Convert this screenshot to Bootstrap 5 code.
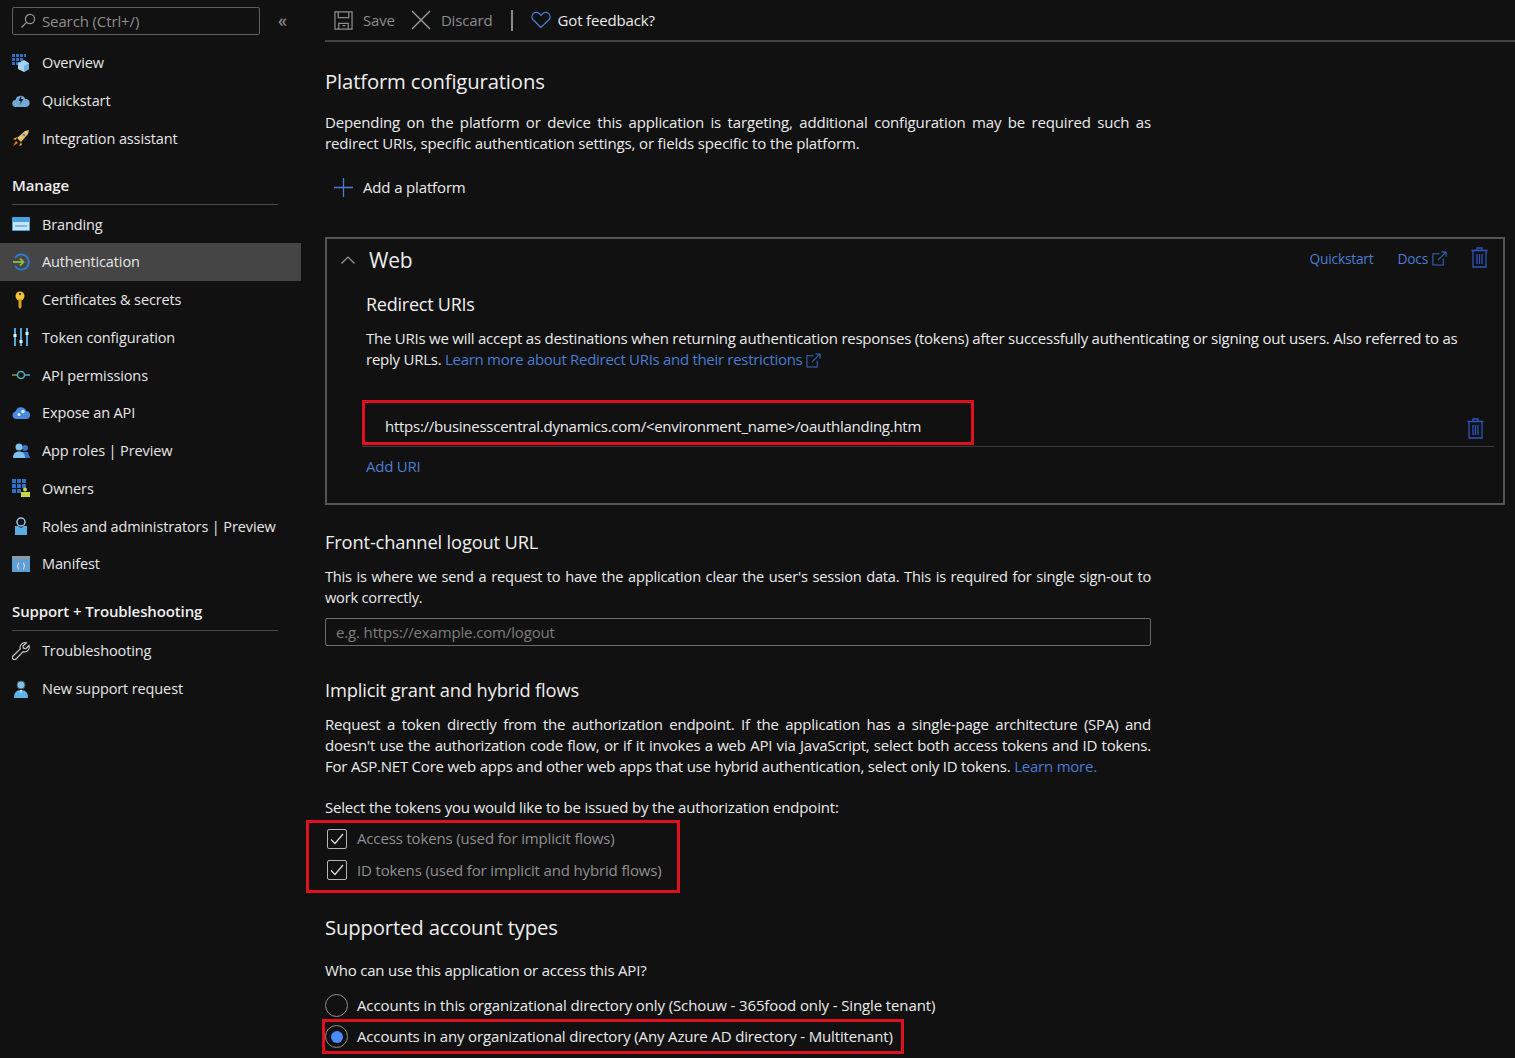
<!DOCTYPE html>
<html lang="en">
<head>
<meta charset="utf-8">
<title>Authentication</title>
<link href="https://cdn.jsdelivr.net/npm/bootstrap@5.3.0/dist/css/bootstrap.min.css" rel="stylesheet">
<style>
html,body{height:1058px;overflow:hidden}
body{background:#111;color:#ebebeb;font-family:"Open Sans","Noto Sans",sans-serif;font-size:14.5px;line-height:21px;letter-spacing:-.12px}
a{text-decoration:none}
.sidepane{width:301px;flex:none}
.searchrow{height:44px;padding:7px 12px 0;align-items:flex-start}
.searchfield{width:248px;height:28px;border:1px solid #5e5e5e;border-radius:2px;color:#8d8d8d;padding:0 7px;gap:6px;font-size:15px}
.collapser{margin-left:18px;color:#999;font-size:18px;line-height:26px}
.navitem{height:37.75px;padding-left:12px;gap:12px;color:#e6e6e6}
.navitem svg{width:18px;height:18px;flex:none}
.navitem.current{background:#454545}
.navhead{font-weight:600;font-size:15px;color:#efefef;margin:17.5px 23px .5px 12px;height:30px;border-bottom:1px solid #4a4a4a;line-height:21px}
.navhead-second{margin-top:17.75px;margin-bottom:1.5px}
.mainpane{flex:1;min-width:0;padding-left:24px;font-size:15px;letter-spacing:-.15px}
.toolstrip{height:42px;border-bottom:2px solid #444;padding-left:9px}
.toolgrey{color:#8c8c8c}
.toolgap{gap:6px}
.toolsep{width:2px;height:21px;background:#8a8a8a;margin:0 18px}
.fbgap{gap:3px}
.sectitle{font-size:20.3px;line-height:28px;font-weight:400;color:#efefef;margin:0}
.title-top{margin-top:25px}
.subtitle{font-size:18.3px;line-height:26px;font-weight:400;color:#efefef;margin:0}
.just{width:826px;text-align:justify;margin:0}
.p-top{margin-top:17px}
.addplat{height:26px;padding-left:9px;gap:10px;margin-top:20px}
.webcard{width:1180px;height:268px;border:2px solid #555;padding:0 9px 0 39px;margin-top:37px;letter-spacing:-.24px}
.webhead{height:42px}
.webname{font-size:21px;margin-left:-25px}
.webname svg{margin-right:14px}
.headlink{font-size:13.8px;margin-bottom:4px}
.headtrash{margin:0 6px 5px 24px}
.linkblue{color:#4b7bd3}
.redirhead{margin-top:10px;font-size:18px}
.redirtext{margin:10.5px 0 0;width:1105px}
.redirlink{letter-spacing:-.3px}
.uriline{border-bottom:1px solid #3d3d3d;height:47px;margin:30px 0 0 -4px;padding-left:4px}
.uricell{width:612px;height:45px;border:3px solid #e0101f;margin-left:-4px;padding:13px 0 0 20px;letter-spacing:-.26px}
.uritrash{margin:18px 10px 0 0}
.adduri{margin-top:9px}
.front-title{margin-top:24px}
.after-sub{margin-top:11px}
.fronttext{font-size:14.6px;letter-spacing:-.2px}
.implicittext{letter-spacing:-.22px}
.urlfield{width:826px;height:28px;border:1px solid #6a6a6a;border-radius:2px;padding:0 10px;color:#7d7d7d;margin-top:10px}
.implicit-title{margin-top:31px}
.selecttext{margin:20px 0 0;letter-spacing:-.19px}
.redframe{border:3px solid #e0101f}
.tokenframe{width:374px;height:73px;margin:2px 0 0 -19px;padding:0 0 4px 18px}
.tick{width:20px;height:20px;border:1px solid #b5b5b5;border-radius:2px;flex:none}
.tokenrow{height:33px;gap:10px;color:#8f8f8f}
.supported-title{margin-top:20px}
.whotext{margin:19px 0 0;letter-spacing:-.19px}
.radiorow{gap:9px}
.radio-plain{height:28px;margin-top:10px;letter-spacing:-.12px}
.radiodot{width:23px;height:23px;border-radius:50%;border:1px solid #8f8f8f;flex:none}
.radiodot.on{display:flex;align-items:center;justify-content:center}
.radiodot.on::after{content:"";width:12px;height:12px;border-radius:50%;background:#4a8cff}
.radioframe{width:582px;height:35px;margin-left:-3px}
</style>
</head>
<body>
<div class="d-flex">
<aside class="sidepane">
  <div class="d-flex searchrow">
    <div class="d-flex align-items-center searchfield">
      <svg width="16" height="16" viewBox="0 0 16 16" fill="none" stroke="#9a9a9a" stroke-width="1.2"><circle cx="10" cy="6" r="4.6"/><path d="M6.6 9.4 1.5 14.5"/></svg>
      <span>Search (Ctrl+/)</span>
    </div>
    <span class="collapser">«</span>
  </div>
  <a class="d-flex align-items-center navitem"><svg viewBox="0 0 18 18"><path fill="#2f6fc4" d="M0 0h3v3H0zM4 0h3v3H4zM8 0h3v3H8zM12 0h2v3h-2zM0 4h3v3H0zM4 4h3v3H4zM8 4h3v3H8zM0 8h3v3H0zM4 8h3v3H4z"/><path fill="#a5d3f0" d="M6 9l6-3 5 3v6l-5 3-6-3z"/><path fill="#6eb0e0" d="M12 12v6l5-3V9z"/></svg><span>Overview</span></a>
  <a class="d-flex align-items-center navitem"><svg viewBox="0 0 18 18"><path fill="#6ea9d7" d="M4 15a3.5 3.5 0 0 1-.4-7 5 5 0 0 1 9.6-1 4 4 0 0 1 .8 8z"/><path fill="#111" d="M9.5 3 6.500 9h2.500l-1.500 4 4-6H9z"/></svg><span>Quickstart</span></a>
  <a class="d-flex align-items-center navitem"><svg viewBox="0 0 18 18"><path fill="#f0a030" d="M5 8 1 10l3 1zM9 13l-2 4 3-1z"/><path fill="#e8c26a" d="M5 9 13 2l4-1-1 4-7 8z"/><path fill="#e8762a" d="M4 12l2 2-5 3z"/><circle cx="12" cy="6" r="1.3" fill="#4a90d9"/></svg><span>Integration assistant</span></a>
  <div class="navhead">Manage</div>
  <a class="d-flex align-items-center navitem"><svg viewBox="0 0 18 18"><rect y="2" width="18" height="14" rx="1" fill="#4aa0dc"/><rect x="1" y="7" width="16" height="8" fill="#c5e4f6"/><path stroke="#3a88c4" d="M3 11h12"/></svg><span>Branding</span></a>
  <a class="d-flex align-items-center navitem current"><svg viewBox="0 0 18 18" fill="none"><path stroke="#2f78cf" stroke-width="2" d="M3 5a7.500 7.500 0 1 1 0 8"/><path stroke="#86b33a" stroke-width="2" d="M1 9h10M8 5.500 11.500 9 8 12.500"/></svg><span>Authentication</span></a>
  <a class="d-flex align-items-center navitem"><svg viewBox="0 0 18 18"><circle cx="8" cy="5" r="4.5" fill="#f2c335"/><path fill="#e0a31e" d="M6.500 8h3v8l-1.500 2-1.500-2z"/><circle cx="8" cy="3" r="1" fill="#111"/></svg><span>Certificates &amp; secrets</span></a>
  <a class="d-flex align-items-center navitem"><svg viewBox="0 0 18 18"><path stroke="#58a6de" stroke-width="2" d="M3 0v18M9 0v18M15 0v18"/><path fill="#e8f4fc" d="M1.500 6h3v3h-3zM7.500 12h3v3h-3zM13.500 4h3v3h-3z"/></svg><span>Token configuration</span></a>
  <a class="d-flex align-items-center navitem"><svg viewBox="0 0 18 18" fill="none"><path stroke="#7fa63a" stroke-width="1.5" d="M0 9h6"/><path stroke="#5aa0d8" stroke-width="1.5" d="M12 9h6"/><circle cx="9" cy="9" r="3.5" stroke="#4fb0b0" stroke-width="1.5"/></svg><span>API permissions</span></a>
  <a class="d-flex align-items-center navitem"><svg viewBox="0 0 18 18"><path fill="#4a8ae0" d="M4 15a3.800 3.800 0 0 1-.4-7.500 5.500 5.500 0 0 1 10.500-.5A4 4 0 0 1 14 15z"/><circle cx="7" cy="10.5" r="1.5" fill="#dcecfa"/><circle cx="11" cy="7.5" r="1.8" fill="#dcecfa"/></svg><span>Expose an API</span></a>
  <a class="d-flex align-items-center navitem"><svg viewBox="0 0 18 18"><circle cx="13" cy="6" r="3" fill="#3a72c8"/><path fill="#3a72c8" d="M10 10h6l2 6h-8z"/><circle cx="7" cy="5" r="3.5" fill="#7cc4ee"/><path fill="#7cc4ee" d="M1 16c0-4 2-6.500 6-6.500s6 2.500 6 6.500z"/></svg><span>App roles | Preview</span></a>
  <a class="d-flex align-items-center navitem"><svg viewBox="0 0 18 18"><path fill="#2f6fc4" d="M0 0h4v4H0zM5 0h4v4H5zM10 0h4v4h-4zM0 5h4v4H0zM5 5h4v4H5zM10 5h4v4h-4zM0 10h4v4H0zM5 10h4v4H5z"/><circle cx="13" cy="10.5" r="2" fill="#c4d84a"/><path fill="#c4d84a" d="M9 13h9v5H9z"/></svg><span>Owners</span></a>
  <a class="d-flex align-items-center navitem"><svg viewBox="0 0 18 18"><circle cx="9" cy="5" r="4" fill="none" stroke="#9ac8e8" stroke-width="1.5"/><path fill="#5aaee0" d="M3 9h3l3 2 3-2h3v9H3z"/></svg><span>Roles and administrators | Preview</span></a>
  <a class="d-flex align-items-center navitem"><svg viewBox="0 0 18 18"><rect y="1" width="18" height="16" fill="#5f9fd4"/><rect y="1" width="18" height="3.5" fill="#8a9aa8"/><path fill="none" stroke="#e6f2fb" d="M7 8c-1 0-1 .5-1 1.500S6 11 5 11c1 0 1 .5 1 1.500S6 14 7 14M11 8c1 0 1 .5 1 1.500s0 1.500 1 1.500c-1 0-1 .5-1 1.500s0 1.500-1 1.500"/></svg><span>Manifest</span></a>
  <div class="navhead navhead-second">Support + Troubleshooting</div>
  <a class="d-flex align-items-center navitem"><svg viewBox="0 0 18 18" fill="none" stroke="#c9c9c9" stroke-width="1.2"><path d="M17 3.500 13.800 6.700 11.500 6.200 11 4 14.300 .9A4.800 4.800 0 0 0 8.300 6.900L1 14a2.100 2.100 0 0 0 3 3l7.200-7.300A4.800 4.800 0 0 0 17 3.500z"/></svg><span>Troubleshooting</span></a>
  <a class="d-flex align-items-center navitem"><svg viewBox="0 0 18 18"><circle cx="9" cy="5" r="4" fill="#7cc4ee" stroke="#555"/><path fill="#5cb4e8" d="M2 18c0-5 2-8 7-8s7 3 7 8z"/><path fill="#e8f4fc" d="M8 10h2l-1 4z"/></svg><span>New support request</span></a>
</aside>

<main class="mainpane">
  <div class="d-flex align-items-center toolstrip">
    <div class="d-flex align-items-center toolgap toolgrey">
      <svg width="19" height="19" viewBox="0 0 20 20" fill="none" stroke="#8c8c8c" stroke-width="1.3"><path d="M1 1h18v18H1zM4.500 1v6h11V1M5 19v-6h10v6M9 15.500h3"/></svg>
      <span class="ms-1 me-3">Save</span>
    </div>
    <div class="d-flex align-items-center toolgap toolgrey">
      <svg width="20" height="20" viewBox="0 0 20 20" fill="none" stroke="#a0a0a0" stroke-width="1.3"><path d="M1 1l18 18M19 1 1 19"/></svg>
      <span class="ms-1">Discard</span>
    </div>
    <div class="toolsep"></div>
    <div class="d-flex align-items-center fbgap">
      <svg width="20" height="18" viewBox="0 0 21 18" fill="none" stroke="#4b7bd3" stroke-width="1.4"><path d="M10.500 16.800 2.300 8.800a4.700 4.700 0 0 1 0-6.500 4.500 4.500 0 0 1 6.400 0l1.800 1.800 1.800-1.800a4.500 4.500 0 0 1 6.400 0 4.700 4.700 0 0 1 0 6.500z"/></svg>
      <span class="ms-1">Got feedback?</span>
    </div>
  </div>

  <h2 class="sectitle title-top">Platform configurations</h2>
  <p class="just p-top">Depending on the platform or device this application is targeting, additional configuration may be required such as redirect URIs, specific authentication settings, or fields specific to the platform.</p>
  <div class="d-flex align-items-center addplat">
    <svg width="19" height="19" viewBox="0 0 19 19" stroke="#4b7bd3" stroke-width="1.3"><path d="M9.500 0v19M0 9.500h19"/></svg>
    <span>Add a platform</span>
  </div>

  <section class="webcard">
    <div class="d-flex align-items-center webhead">
      <div class="d-flex align-items-center webname flex-grow-1"><svg width="14" height="8" viewBox="0 0 14 8" fill="none" stroke="#9a9a9a" stroke-width="1.2"><path d="M.5 7.500 7 1l6.500 6.500"/></svg><span>Web</span></div>
      <a class="linkblue headlink">Quickstart</a>
      <a class="linkblue headlink d-flex align-items-center ms-4">Docs<svg class="ms-1" width="15" height="15" viewBox="0 0 16 16" fill="none" stroke="#3a68c0" stroke-width="1.1"><path d="M8 3H1v12h11V8M6.500 9.500 15 1M10 1h5v5"/></svg></a>
      <svg class="headtrash" width="17" height="21" viewBox="0 0 17 21" fill="none" stroke="#2f55bd" stroke-width="1.3"><path d="M.5 3.500h16M6 3.500V1h5v2.500M2 3.500V20h13V3.500M6 7v10M8.500 7v10M11 7v10"/></svg>
    </div>
    <h3 class="subtitle redirhead">Redirect URIs</h3>
    <p class="redirtext">The URIs we will accept as destinations when returning authentication responses (tokens) after successfully authenticating or signing out users. Also referred to as reply URLs. <a class="linkblue redirlink">Learn more about Redirect URIs and their restrictions<svg class="ms-1" width="15" height="15" viewBox="0 0 16 16" fill="none" stroke="#3a68c0" stroke-width="1.1"><path d="M8 3H1v12h11V8M6.500 9.500 15 1M10 1h5v5"/></svg></a></p>
    <div class="d-flex justify-content-between uriline">
      <div class="uricell">https://businesscentral.dynamics.com/&lt;environment_name&gt;/oauthlanding.htm</div>
      <svg class="uritrash" width="17" height="21" viewBox="0 0 17 21" fill="none" stroke="#2f55bd" stroke-width="1.3"><path d="M.5 3.500h16M6 3.500V1h5v2.500M2 3.500V20h13V3.500M6 7v10M8.500 7v10M11 7v10"/></svg>
    </div>
    <a class="linkblue d-block adduri">Add URI</a>
  </section>

  <h3 class="subtitle front-title">Front-channel logout URL</h3>
  <p class="just after-sub fronttext">This is where we send a request to have the application clear the user's session data. This is required for single sign-out to work correctly.</p>
  <div class="d-flex align-items-center urlfield">e.g. https://example.com/logout</div>

  <h3 class="subtitle implicit-title">Implicit grant and hybrid flows</h3>
  <p class="just after-sub implicittext">Request a token directly from the authorization endpoint. If the application has a single-page architecture (SPA) and doesn't use the authorization code flow, or if it invokes a web API via JavaScript, select both access tokens and ID tokens. For ASP.NET Core web apps and other web apps that use hybrid authentication, select only ID tokens. <a class="linkblue">Learn more.</a></p>
  <p class="selecttext">Select the tokens you would like to be issued by the authorization endpoint:</p>
  <div class="redframe tokenframe d-flex flex-column justify-content-center">
    <div class="d-flex align-items-center tokenrow"><span class="tick d-flex align-items-center justify-content-center"><svg width="14" height="12" viewBox="0 0 14 12" fill="none" stroke="#ddd" stroke-width="1.2"><path d="M1 6.500 5 10.500 13 1"/></svg></span><span>Access tokens (used for implicit flows)</span></div>
    <div class="d-flex align-items-center tokenrow"><span class="tick d-flex align-items-center justify-content-center"><svg width="14" height="12" viewBox="0 0 14 12" fill="none" stroke="#ddd" stroke-width="1.2"><path d="M1 6.500 5 10.500 13 1"/></svg></span><span>ID tokens (used for implicit and hybrid flows)</span></div>
  </div>

  <h2 class="sectitle supported-title">Supported account types</h2>
  <p class="whotext">Who can use this application or access this API?</p>
  <div class="d-flex align-items-center radiorow radio-plain"><span class="radiodot"></span><span>Accounts in this organizational directory only (Schouw - 365food only - Single tenant)</span></div>
  <div class="d-flex align-items-center radiorow redframe radioframe"><span class="radiodot on"></span><span>Accounts in any organizational directory (Any Azure AD directory - Multitenant)</span></div>
</main>
</div>
</body>
</html>
